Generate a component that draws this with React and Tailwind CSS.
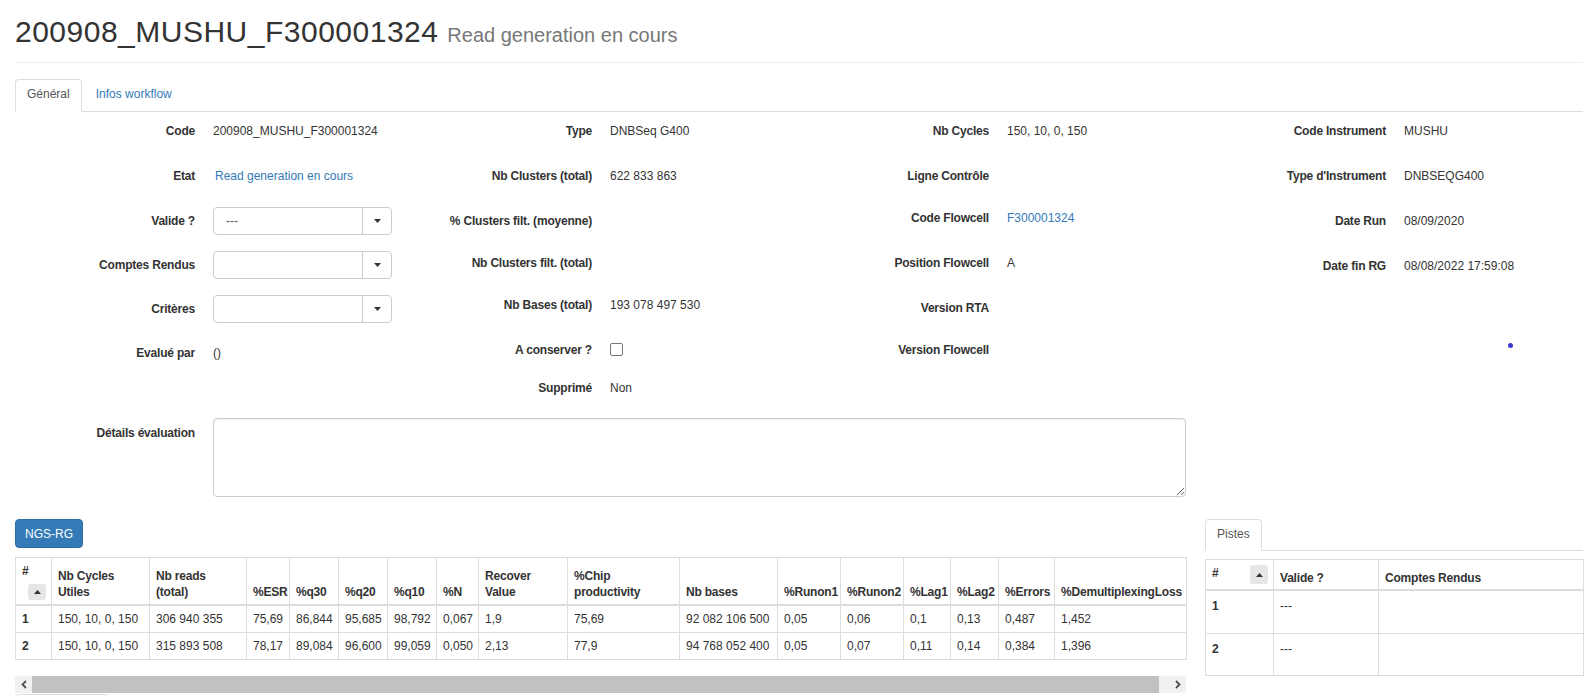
import React from "react";

function Caret() {
  return (
    <svg width="7" height="4" viewBox="0 0 7 4">
      <path d="M0 0H7L3.5 4Z" fill="#333" />
    </svg>
  );
}

function SortBtn({ cls }) {
  return (
    <div className={`flex items-center justify-center rounded-[3px] bg-[#e6e6e9] ${cls}`}>
      <svg width="7" height="4" viewBox="0 0 7 4">
        <path d="M0 4H7L3.5 0Z" fill="#333" />
      </svg>
    </div>
  );
}

function Select({ value }) {
  return (
    <div className="flex h-[28px] w-[180px] rounded-[4px] border border-[#ccc] bg-white">
      <div className="flex flex-1 items-center pl-[12px] text-[#555]">{value}</div>
      <div className="flex w-[29px] items-center justify-center border-l border-[#ccc]">
        <Caret />
      </div>
    </div>
  );
}

function Row({ label, children, h }) {
  return (
    <div className={`grid grid-cols-[180px_179px] gap-x-[18px] ${h}`}>
      <div className="flex h-[29px] items-center justify-end whitespace-nowrap text-right font-bold tracking-[-0.2px]">
        {label}
      </div>
      <div className="flex h-[29px] items-center whitespace-nowrap">{children}</div>
    </div>
  );
}

const link = "text-[#337ab7]";

const col1 = [
  { l: "Code", v: "200908_MUSHU_F300001324", h: "h-[45px]" },
  { l: "Etat", v: <span className={`${link} ml-[2px]`}>Read generation en cours</span>, h: "h-[45px]" },
  { l: "Valide ?", v: <Select value="---" />, h: "h-[44px]" },
  { l: "Comptes Rendus", v: <Select value="" />, h: "h-[44px]" },
  { l: "Critères", v: <Select value="" />, h: "h-[44px]" },
  { l: "Evalué par", v: "()", h: "h-[29px]" },
];

const col2 = [
  { l: "Type", v: "DNBSeq G400", h: "h-[45px]" },
  { l: "Nb Clusters (total)", v: "622 833 863", h: "h-[45px]" },
  { l: "% Clusters filt. (moyenne)", v: "", h: "h-[42px]" },
  { l: "Nb Clusters filt. (total)", v: "", h: "h-[42px]" },
  { l: "Nb Bases (total)", v: "193 078 497 530", h: "h-[45px]" },
  {
    l: "A conserver ?",
    v: <span className="block h-[13px] w-[13px] rounded-[2px] border border-[#767676] bg-white" />,
    h: "h-[38px]",
  },
  { l: "Supprimé", v: "Non", h: "h-[29px]" },
];

const col3 = [
  { l: "Nb Cycles", v: "150, 10, 0, 150", h: "h-[45px]" },
  { l: "Ligne Contrôle", v: "", h: "h-[42px]" },
  { l: "Code Flowcell", v: <span className={link}>F300001324</span>, h: "h-[45px]" },
  { l: "Position Flowcell", v: "A", h: "h-[45px]" },
  { l: "Version RTA", v: "", h: "h-[42px]" },
  { l: "Version Flowcell", v: "", h: "h-[29px]" },
];

const col4 = [
  { l: "Code Instrument", v: "MUSHU", h: "h-[45px]" },
  { l: "Type d'Instrument", v: "DNBSEQG400", h: "h-[45px]" },
  { l: "Date Run", v: "08/09/2020", h: "h-[45px]" },
  { l: "Date fin RG", v: "08/08/2022 17:59:08", h: "h-[80px]" },
];

function Col({ rows, children }) {
  return (
    <div className="flex flex-col">
      {rows.map((r, i) => (
        <Row key={i} label={r.l} h={r.h}>
          {r.v}
        </Row>
      ))}
      {children}
    </div>
  );
}

const headers = [
  { t: "Nb Cycles Utiles", w: "w-[98px]" },
  { t: "Nb reads (total)", w: "w-[97px]" },
  { t: "%ESR", w: "w-[43px]" },
  { t: "%q30", w: "w-[49px]" },
  { t: "%q20", w: "w-[49px]" },
  { t: "%q10", w: "w-[49px]" },
  { t: "%N", w: "w-[42px]" },
  { t: "Recover Value", w: "w-[89px]" },
  { t: "%Chip productivity", w: "w-[112px]" },
  { t: "Nb bases", w: "w-[98px]" },
  { t: "%Runon1", w: "w-[63px]" },
  { t: "%Runon2", w: "w-[63px]" },
  { t: "%Lag1", w: "w-[47px]" },
  { t: "%Lag2", w: "w-[48px]" },
  { t: "%Errors", w: "w-[56px]" },
  { t: "%DemultiplexingLoss", w: "w-[132px]" },
];

const rows = [
  ["1", "150, 10, 0, 150", "306 940 355", "75,69", "86,844", "95,685", "98,792", "0,067", "1,9", "75,69", "92 082 106 500", "0,05", "0,06", "0,1", "0,13", "0,487", "1,452"],
  ["2", "150, 10, 0, 150", "315 893 508", "78,17", "89,084", "96,600", "99,059", "0,050", "2,13", "77,9", "94 768 052 400", "0,05", "0,07", "0,11", "0,14", "0,384", "1,396"],
];

function Chevron({ dir }) {
  return (
    <svg width="6" height="9" viewBox="0 0 6 9">
      <path
        d={dir === "l" ? "M5 1L1.5 4.5L5 8" : "M1 1L4.5 4.5L1 8"}
        stroke="#505050"
        strokeWidth="1.8"
        fill="none"
      />
    </svg>
  );
}

export default function App() {
  return (
    <div className="h-[696px] w-[1592px] overflow-hidden bg-white font-['Liberation_Sans',Arial,sans-serif] text-[12px] leading-[16px] text-[#333]">
      <div className="w-[1583px] pl-[15px]">
        {/* Page header */}
        <div className="border-b border-[#eee] pb-[14px] pt-[15px]">
          <h1 className="whitespace-nowrap text-[30px] leading-[33px] tracking-[0.5px] text-[#333]">
            200908_MUSHU_F300001324{" "}
            <span className="text-[20px] leading-[20px] tracking-normal text-[#777]">Read generation en cours</span>
          </h1>
        </div>

        {/* Tabs */}
        <div className="mt-[16px] flex border-b border-[#ddd]">
          <div className="-mb-px rounded-t-[4px] border border-[#ddd] border-b-white bg-white px-[11px] pb-[8px] pt-[6px] leading-[17px] text-[#555]">
            Général
          </div>
          <div className="-mb-px ml-[2px] border border-transparent px-[11px] pb-[8px] pt-[6px] leading-[17px] text-[#337ab7]">
            Infos workflow
          </div>
        </div>

        {/* Form */}
        <div className="mb-[16px] mt-[4px] grid grid-cols-[377px_377px_377px_377px] items-start gap-x-[20px]">
          <Col rows={col1} />
          <Col rows={col2} />
          <Col rows={col3} />
          <Col rows={col4}>
            <div className="flex h-[29px] items-center">
              <span className="ml-[302px] block h-[5px] w-[5px] rounded-full bg-[#3b3bd1]" />
            </div>
          </Col>
        </div>

        <div className="grid grid-cols-[180px_973px] gap-x-[18px]">
          <div className="pt-[7px] text-right font-bold tracking-[-0.2px]">Détails évaluation</div>
          <textarea
            readOnly
            className="h-[79px] w-[973px] rounded-[4px] border border-[#ccc] shadow-[inset_0_1px_1px_rgba(0,0,0,0.075)] outline-none"
          />
        </div>

        {/* Bottom section */}
        <div className="mt-[22px] flex gap-x-[19px]">
          <div className="w-[1171px]">
            <div className="flex h-[29px] w-[68px] items-center justify-center rounded-[4px] border border-[#2e6da4] bg-[#337ab7] text-white">
              NGS-RG
            </div>
            <table className="mt-[9px] w-[1171px] table-fixed border-collapse border border-[#ddd]">
              <thead>
                <tr>
                  <th className="w-[36px] border border-b-2 border-[#ddd] px-[6px] pb-[4px] pt-[5px] text-left align-top font-bold">
                    <div>#</div>
                    <SortBtn cls="ml-[6px] mt-[5px] h-[16px] w-[18px]" />
                  </th>
                  {headers.map((h, i) => (
                    <th
                      key={i}
                      className={`${h.w} border border-b-2 border-[#ddd] px-[6px] pb-[4px] pt-[5px] text-left align-bottom font-bold tracking-[-0.2px]`}
                    >
                      {h.t === "%DemultiplexingLoss" ? <span className="whitespace-nowrap">{h.t}</span> : h.t}
                    </th>
                  ))}
                </tr>
              </thead>
              <tbody>
                {rows.map((r, i) => (
                  <tr key={i}>
                    {r.map((c, j) => (
                      <td
                        key={j}
                        className={`whitespace-nowrap border border-[#ddd] px-[6px] py-[5px] ${j === 0 ? "font-bold" : ""}`}
                      >
                        {c}
                      </td>
                    ))}
                  </tr>
                ))}
              </tbody>
            </table>
            {/* fake scrollbar */}
            <div className="mt-[16px] flex h-[17px] w-[1171px] bg-[#f1f1f1]">
              <div className="flex w-[17px] items-center justify-center">
                <Chevron dir="l" />
              </div>
              <div className="w-[1127px] bg-[#c1c1c1]" />
              <div className="flex-1" />
              <div className="flex w-[17px] items-center justify-center">
                <Chevron dir="r" />
              </div>
            </div>
            <div className="mt-[1px] h-[10px] w-[94px] rounded-t-[4px] border border-[#ddd]" />
          </div>

          <div className="w-[378px]">
            <div className="flex border-b border-[#ddd]">
              <div className="-mb-px rounded-t-[4px] border border-[#ddd] border-b-white bg-white px-[11px] pb-[7px] pt-[6px] leading-[17px] text-[#555]">
                Pistes
              </div>
            </div>
            <table className="mt-[8px] w-[378px] table-fixed border-collapse border border-[#ddd]">
              <thead>
                <tr>
                  <th className="w-[68px] border border-b-2 border-[#ddd] px-[6px] pb-[5px] pt-[5px] text-left align-top font-bold">
                    <div className="flex items-start justify-between">
                      <span>#</span>
                      <SortBtn cls="-mr-[1px] h-[19px] w-[18px]" />
                    </div>
                  </th>
                  <th className="w-[105px] border border-b-2 border-[#ddd] px-[6px] pb-[3px] text-left align-bottom font-bold tracking-[-0.2px]">
                    Valide ?
                  </th>
                  <th className="w-[205px] border border-b-2 border-[#ddd] px-[6px] pb-[3px] text-left align-bottom font-bold tracking-[-0.2px]">
                    Comptes Rendus
                  </th>
                </tr>
              </thead>
              <tbody>
                {["1", "2"].map((n, i) => (
                  <tr key={n} className={i === 0 ? "h-[43px]" : "h-[42px]"}>
                    <td className="border border-[#ddd] px-[6px] pt-[7px] align-top font-bold">{n}</td>
                    <td className="border border-[#ddd] px-[6px] pt-[7px] align-top">---</td>
                    <td className="border border-[#ddd] px-[6px] pt-[7px] align-top"></td>
                  </tr>
                ))}
              </tbody>
            </table>
          </div>
        </div>
      </div>
    </div>
  );
}
